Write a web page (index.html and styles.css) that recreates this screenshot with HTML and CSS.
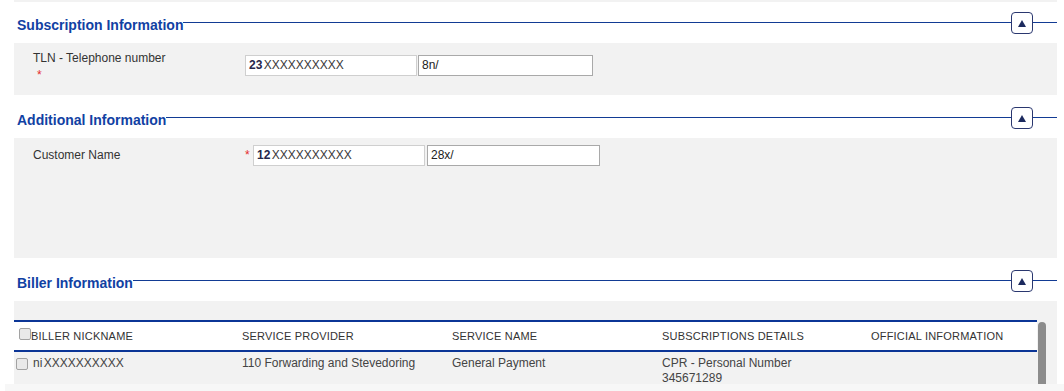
FILE: index.html
```html
<!DOCTYPE html>
<html lang="en">
<head>
    <meta charset="UTF-8">
    <meta name="viewport" content="width=device-width, initial-scale=1.0">
    <title>Subscription</title>
    <link rel="stylesheet" href="styles.css">
</head>
<body>
    <div class="page">
        <div class="strip"></div>

        <section class="section first">
            <div class="section-head">
                <h2 class="section-title">Subscription Information</h2>
                <span class="rule"></span>
                <button class="toggle" type="button" aria-label="Collapse">
                    <svg width="8" height="7" viewBox="0 0 8 7"><polygon points="0,7 4,0 8,7" fill="#1c2a5e"/></svg>
                </button>
                <span class="rule rule-end"></span>
            </div>
            <div class="panel panel-sub">
                <div class="field">
                    <div class="field-label">
                        TLN - Telephone number
                        <span class="req req-below">*</span>
                    </div>
                    <div class="field-inputs">
                        <div class="box box-light"><b>23</b> XXXXXXXXXX</div>
                        <div class="box box-dark">8n/</div>
                    </div>
                </div>
            </div>
        </section>

        <section class="section">
            <div class="section-head">
                <h2 class="section-title">Additional Information</h2>
                <span class="rule"></span>
                <button class="toggle" type="button" aria-label="Collapse">
                    <svg width="8" height="7" viewBox="0 0 8 7"><polygon points="0,7 4,0 8,7" fill="#1c2a5e"/></svg>
                </button>
                <span class="rule rule-end"></span>
            </div>
            <div class="panel panel-add">
                <div class="field field-inline">
                    <div class="field-label">Customer Name</div>
                    <div class="field-inputs">
                        <span class="req req-side">*</span>
                        <div class="box box-light"><b>12</b> XXXXXXXXXX</div>
                        <div class="box box-dark">28x/</div>
                    </div>
                </div>
            </div>
        </section>

        <section class="section">
            <div class="section-head">
                <h2 class="section-title">Biller Information</h2>
                <span class="rule"></span>
                <button class="toggle" type="button" aria-label="Collapse">
                    <svg width="8" height="7" viewBox="0 0 8 7"><polygon points="0,7 4,0 8,7" fill="#1c2a5e"/></svg>
                </button>
                <span class="rule rule-end"></span>
            </div>
            <div class="panel panel-biller">
                <div class="table">
                    <div class="row head">
                        <div class="cell first-cell"><span class="check check-head"></span>Biller Nickname</div>
                        <div class="cell">Service Provider</div>
                        <div class="cell">Service Name</div>
                        <div class="cell">Subscriptions Details</div>
                        <div class="cell">Official Information</div>
                    </div>
                    <div class="row data">
                        <div class="cell first-cell"><span class="check"></span>ni XXXXXXXXXX</div>
                        <div class="cell">110 Forwarding and Stevedoring</div>
                        <div class="cell">General Payment</div>
                        <div class="cell">CPR - Personal Number<br>345671289</div>
                        <div class="cell"></div>
                    </div>
                </div>
                <div class="scrollbar"></div>
            </div>
        </section>
    </div>
    <div class="band"></div>
</body>
</html>
```

FILE: styles.css
```css
:root {
    --panel-bg: #f2f2f2;
    --title-color: #1141a3;
    --rule-color: #123b94;
    --text-color: #333333;
    --navy: #2a376f;
    --required: #e52b2b;
}

body {
    margin: 0;
    font-family: "Liberation Sans", Arial, sans-serif;
    color: var(--text-color);
    background: #ffffff;
}
.page {
    margin-left: 14px;
    width: 1043px;
}
.strip {
    height: 2px;
    background: var(--panel-bg);
}

/* section header with the rule running through */
.section-head {
    display: flex;
    align-items: flex-start;
    height: 43px;
}
.first .section-head {
    margin-top: -2px;
}
.section-title {
    margin: 17px 0 0;
    padding-left: 3px;
    font-size: 14px;
    line-height: 16px;
    font-weight: bold;
    color: var(--title-color);
    white-space: nowrap;
}
.rule {
    flex: 1;
    height: 1px;
    margin-top: 22px;
    background: var(--rule-color);
}
.rule-end {
    flex: none;
    width: 24px;
}
.toggle {
    width: 22px;
    height: 22px;
    margin-top: 12px;
    padding: 0;
    border: 1.5px solid var(--navy);
    border-radius: 4px;
    background: #ffffff;
    display: flex;
    align-items: center;
    justify-content: center;
    cursor: pointer;
}

/* grey panels */
.panel {
    background: var(--panel-bg);
    box-sizing: border-box;
}
.panel-sub {
    height: 52px;
    padding: 8px 0 0 19px;
}
.panel-add {
    height: 120px;
    padding: 7px 0 0 19px;
}
.field {
    display: flex;
    align-items: flex-start;
    font-size: 12px;
}
.field-label {
    width: 212px;
    line-height: 14px;
}
.field-inline .field-label {
    line-height: 21px;
}
.field-inline {
    align-items: center;
}
.field-inputs {
    display: flex;
    gap: 2px;
    align-items: center;
}
.panel-sub .field-inputs {
    margin-top: 4px;
    gap: 1px;
}
.req {
    color: var(--required);
    font-size: 12px;
}
.req-below {
    display: block;
    margin: 3px 0 0 4px;
}
.req-side {
    width: 6px;
    line-height: 21px;
}
.box {
    height: 21px;
    box-sizing: border-box;
    padding: 0 3px;
    line-height: 19px;
    font-size: 12px;
    background: #ffffff;
    color: #3a3a3a;
    white-space: nowrap;
    word-spacing: -2px;
}
.box b {
    color: #26264a;
}
.box-light {
    width: 172px;
    border: 1px solid #cfcfcf;
}
.box-dark {
    width: 175px;
    border: 1px solid #a9a9a9;
    color: #222222;
}
.panel-add .box-dark {
    width: 173px;
}

/* biller table */
.panel-biller {
    height: 83px;
    padding-top: 19px;
    display: flex;
    align-items: stretch;
    overflow: hidden;
}
.table {
    width: 1023px;
    font-size: 12px;
}
.row {
    display: grid;
    grid-template-columns: 223px 210px 210px 209px 1fr;
}
.row.head {
    height: 32px;
    box-sizing: border-box;
    border-top: 2px solid #0b3596;
    border-bottom: 2px solid #0b3596;
    background: #ffffff;
    align-items: center;
    font-size: 11px;
    letter-spacing: 0.2px;
    text-transform: uppercase;
    color: #333333;
}
.row.data {
    padding-top: 4px;
    line-height: 15px;
    color: #444444;
}
.cell {
    padding-left: 5px;
    white-space: nowrap;
}
.first-cell {
    display: flex;
    align-items: center;
}
.data .first-cell {
    padding-left: 2px;
    align-items: flex-start;
    word-spacing: -2px;
}
.check {
    width: 12px;
    height: 12px;
    box-sizing: border-box;
    border: 1px solid #a2a2a2;
    border-radius: 2px;
    background: #e9e9e9;
    margin-right: 5px;
    margin-top: 2px;
    flex: none;
}
.check-head {
    margin: -4px 0 0 0;
}
.scrollbar {
    width: 8px;
    margin-left: 1px;
    border-radius: 4px 4px 0 0;
    background: #8c8c8c;
    margin-top: 2px;
}

.band {
    margin-left: 5px;
    height: 7px;
    background: #f7f7f7;
}
```
